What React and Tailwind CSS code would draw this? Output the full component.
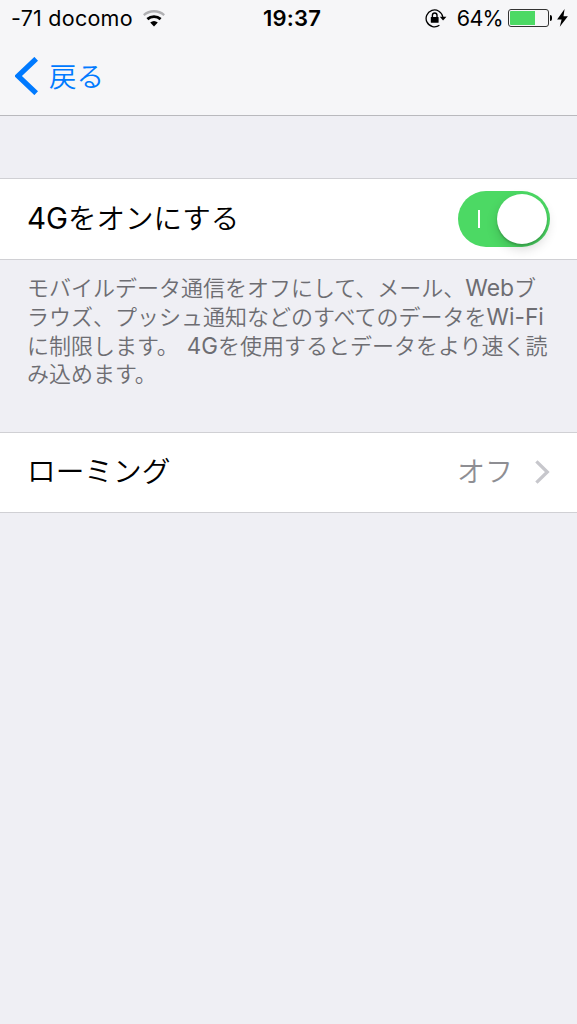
import React from 'react'

// Latin runs are set slightly larger than the kana around them
function Latin({ children, className = '' }) {
  return <span className={`font-['Inter',sans-serif] leading-none ${className}`}>{children}</span>
}

function WifiIcon() {
  return (
    <svg className="ml-[10px] h-[17px] w-[22px]" viewBox="0 0 22 17" fill="none">
      <path d="M0.8 5.1a15.4 15.4 0 0 1 20.4 0" stroke="#b0b0b3" strokeWidth="2.3" />
      <path d="M4.4 9.1a9.8 9.8 0 0 1 13.2 0" stroke="#000" strokeWidth="2.8" />
      <path d="M7.2 12.6a5.7 5.7 0 0 1 7.6 0L11 16.6z" fill="#000" />
    </svg>
  )
}

function RotationLockIcon() {
  return (
    <svg className="mb-px h-5 w-[22px]" viewBox="0 0 22 20" fill="none">
      <path d="M14.4 17.2A8.4 8.4 0 1 1 17.8 9" stroke="#000" strokeWidth="1.3" />
      <path d="M14.8 8.8h6.6l-3.3 3.6z" fill="#000" />
      <rect x="5.8" y="9" width="7.8" height="5.8" rx="0.6" fill="#000" />
      <path d="M7.4 9.2V7.3a2.3 2.3 0 0 1 4.6 0v1.9" stroke="#000" strokeWidth="1.4" />
    </svg>
  )
}

function Battery() {
  return (
    <div className="ml-[5px] flex items-center">
      <div className="h-[18px] w-[41px] rounded-[3px] border border-[#333] p-px">
        <div className="h-full w-[25px] rounded-l-[1px] bg-[#4cd964]" />
      </div>
      <div className="ml-px h-[6px] w-[2px] rounded-r-full bg-black" />
      <svg className="ml-[5px] h-[18px] w-[11px]" viewBox="0 0 11 18">
        <path d="M7.6 0L0.1 10.4h4.5L2.8 17.8 10.9 7.2H6.5z" fill="#000" />
      </svg>
    </div>
  )
}

function StatusBar() {
  return (
    <div className="grid h-9 grid-cols-[1fr_auto_1fr] items-center pl-[11px] pr-[9px] font-['Inter',sans-serif] text-[21.5px] leading-9">
      <div className="flex items-center">
        <span className="tracking-[0.25px]">-71 docomo</span>
        <WifiIcon />
      </div>
      <span className="pl-[5px] text-[22px] font-semibold tracking-[0.2px]">19:37</span>
      <div className="flex items-center justify-end">
        <RotationLockIcon />
        <span className="ml-[10px] tracking-[-0.7px]">64%</span>
        <Battery />
      </div>
    </div>
  )
}

function Toggle() {
  return (
    <div className="flex h-14 w-[92px] items-center justify-between rounded-full bg-[#4cd964] pl-5 pr-[3px]">
      <div className="h-[18px] w-[2px] bg-white" />
      <div className="size-[50px] rounded-full bg-white shadow-[0_5px_12px_rgba(0,0,0,0.16),0_2px_2px_rgba(0,0,0,0.18)]" />
    </div>
  )
}

export default function App() {
  return (
    <div className="h-screen overflow-hidden bg-[#efeff4] font-['Noto_Sans_CJK_JP',sans-serif] font-[350] text-black">
      <header className="h-[116px] border-b border-[#b9b9bd] bg-[#f6f6f8] font-normal">
        <StatusBar />
        <div className="flex h-[79px] items-center pl-[15px] font-[350] text-[#007aff]">
          <svg className="h-[38px] w-[23px]" viewBox="0 0 23 38" fill="none">
            <path d="M21.2 1.8L3 19l18.2 17.2" stroke="#007aff" strokeWidth="5.3" />
          </svg>
          <span className="ml-[11px] text-[27.5px] leading-none">戻る</span>
        </div>
      </header>

      <div className="mt-[62px] flex h-[82px] items-center justify-between border-y border-[#d0d0d4] bg-white pl-[27px] pr-[27px]">
        <span className="pb-0.5 text-[28.5px] leading-none">
          <Latin className="text-[29.5px] font-normal">4G</Latin>をオンにする
        </span>
        <Toggle />
      </div>

      <p className="mt-[12px] h-[117px] whitespace-nowrap pl-[27px] text-[22px] leading-[28.8px] text-[#6d6d72]">
        モバイルデータ通信をオフにして、メール、<Latin className="text-[22.9px] font-normal">Web</Latin>ブ
        <br />
        ラウズ、プッシュ通知などのすべてのデータを<Latin className="text-[22.7px] font-normal">Wi-Fi</Latin>
        <br />
        に制限します。 <Latin className="ml-[3px] text-[22.4px] font-normal">4G</Latin>を使用するとデータをより速く読
        <br />
        み込めます。
      </p>

      <div className="mt-[43px] flex h-[81px] items-center justify-between border-y border-[#d0d0d4] bg-white pl-[27px] pr-[27px] text-[28.7px] leading-none">
        <span className="pb-[5px]">ローミング</span>
        <div className="flex items-center text-[#8e8e93]">
          <span className="pb-[5px] text-[28px]">オフ</span>
          <svg className="mb-px ml-[22px] h-6 w-[15px]" viewBox="0 0 15 24" fill="none">
            <path d="M1.4 1.4L12.3 12 1.4 22.6" stroke="#c7c7cc" strokeWidth="3.3" />
          </svg>
        </div>
      </div>
    </div>
  )
}
